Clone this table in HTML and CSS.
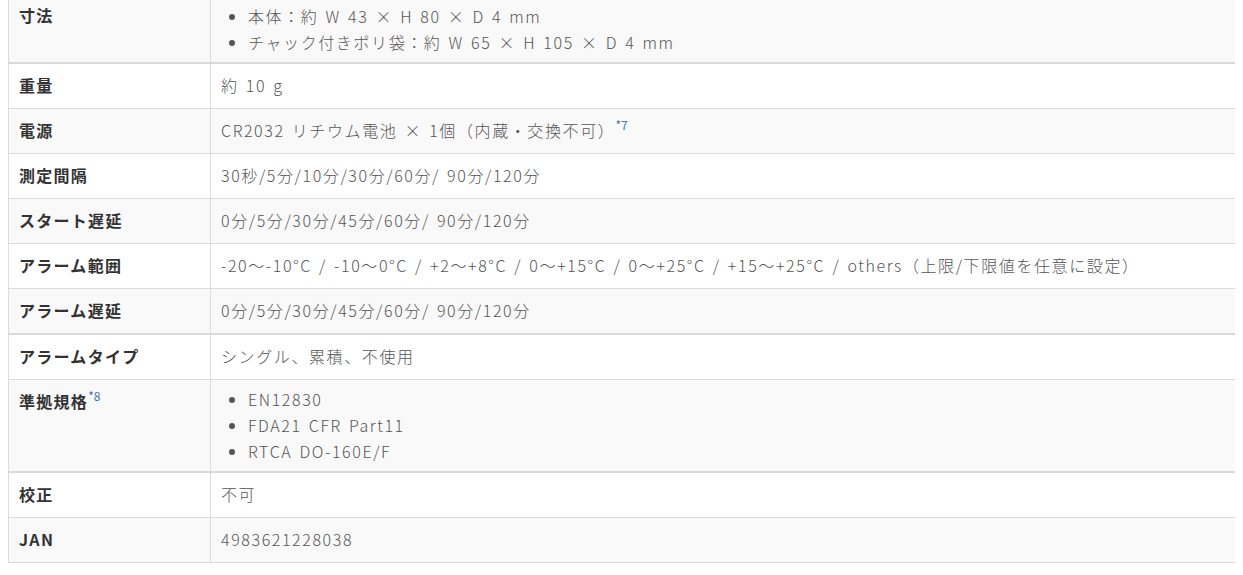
FILE: index.html
```html
<!DOCTYPE html>
<html lang="ja">
<head>
<meta charset="utf-8">
<title>仕様</title>
<link rel="stylesheet" href="styles.css">
</head>
<body>
<div class="wrap">
<table class="spec">
  <tbody>
    <tr class="sep">
      <th>寸法</th>
      <td class="list-cell first">
        <ul>
          <li>本体：約 W 43 × H 80 × D 4 mm</li>
          <li>チャック付きポリ袋：約 W 65 × H 105 × D 4 mm</li>
        </ul>
      </td>
    </tr>
    <tr><th>重量</th><td>約 10 g</td></tr>
    <tr><th>電源</th><td>CR2032 リチウム電池 × 1個（内蔵・交換不可）<sup class="note">*7</sup></td></tr>
    <tr><th>測定間隔</th><td>30秒/5分/10分/30分/60分/ 90分/120分</td></tr>
    <tr><th>スタート遅延</th><td>0分/5分/30分/45分/60分/ 90分/120分</td></tr>
    <tr><th>アラーム範囲</th><td>-20～-10°C / -10～0°C / +2～+8°C / 0～+15°C / 0～+25°C / +15～+25°C / others（上限/下限値を任意に設定）</td></tr>
    <tr class="sep"><th>アラーム遅延</th><td>0分/5分/30分/45分/60分/ 90分/120分</td></tr>
    <tr><th>アラームタイプ</th><td>シングル、累積、不使用</td></tr>
    <tr class="sep">
      <th>準拠規格<sup class="note">*8</sup></th>
      <td class="list-cell">
        <ul>
          <li>EN12830</li>
          <li>FDA21 CFR Part11</li>
          <li>RTCA DO-160E/F</li>
        </ul>
      </td>
    </tr>
    <tr><th>校正</th><td>不可</td></tr>
    <tr><th>JAN</th><td>4983621228038</td></tr>
  </tbody>
</table>
</div>
</body>
</html>
```

FILE: styles.css
```css
html {
  overflow: hidden;
  scrollbar-width: none;
}
body {
  margin: 0 8px;
  background: #fff;
  font-family: "Noto Sans CJK JP", "Noto Sans", sans-serif;
  font-size: 16px;
  letter-spacing: 0.1em;
}
.wrap {
  width: 1270px;
  margin-top: -7px;
}
.spec {
  border-collapse: collapse;
  width: 100%;
}
.spec tr:nth-child(odd) {
  background: #f9f9f9;
}
.spec tr:nth-child(even) {
  background: #fff;
}
.spec th,
.spec td {
  border: 1px solid #dcdcdc;
  padding: 9px 10px 11px;
  line-height: 24px;
  text-align: left;
  vertical-align: top;
}
.spec tr.sep th,
.spec tr.sep td {
  border-bottom: 2px solid #d9d9d9;
}
.spec th {
  width: 181px;
  font-weight: bold;
  color: #333;
  letter-spacing: 0.08em;
}
.spec td {
  color: #555;
  font-weight: 300;
  word-spacing: 2px;
}
.spec td.list-cell {
  padding-top: 6px;
  padding-bottom: 7px;
}
.spec td.list-cell.first {
  padding-top: 9px;
  padding-bottom: 7px;
}
.spec ul {
  margin: 0;
  padding-left: 27px;
}
.spec li {
  line-height: 26px;
}
.note {
  color: #3f72b5;
  font-size: 12px;
  font-weight: normal;
  letter-spacing: 0;
  word-spacing: 0;
  line-height: 0;
  vertical-align: 7px;
}
```
